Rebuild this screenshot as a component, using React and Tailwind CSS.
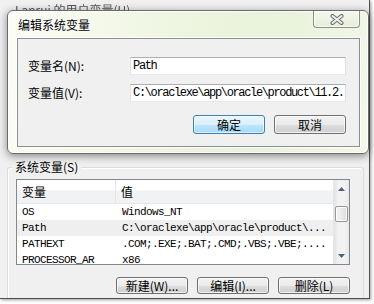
const cjk = "font-['Noto_Sans_CJK_SC','Noto_Sans',sans-serif]"
const mono = "font-['Liberation_Mono','Noto_Sans_CJK_SC',monospace]"

function Button({ children, primary, className = '' }) {
  return (
    <div
      className={
        'flex items-center justify-center rounded-[3px] border text-[12px] leading-none text-black ' +
        (primary
          ? 'border-[#3c7fb1] bg-[linear-gradient(#eaf6fd_0%,#d9f0fc_50%,#bee6fd_51%,#a7d9f5_100%)] shadow-[inset_0_0_0_1px_rgba(255,255,255,0.6)] '
          : 'border-[#707070] bg-[linear-gradient(#f2f2f2_0%,#ebebeb_50%,#dddddd_51%,#cfcfcf_100%)] shadow-[inset_0_0_0_1px_rgba(255,255,255,0.7)] ') +
        className
      }
    >
      {children}
    </div>
  )
}

function TextBox({ value }) {
  return (
    <div className="w-[218px] h-[18px] bg-white border border-t-[#abadb3] border-l-[#e2e3ea] border-r-[#dbdfe6] border-b-[#e3e9ef] overflow-hidden whitespace-nowrap flex items-center pl-[2px]">
      <span className={mono + ' text-[12px] tracking-[-1.35px] leading-none text-black'}>{value}</span>
    </div>
  )
}

const rows = [
  ['OS', 'Windows_NT'],
  ['Path', 'C:\\oraclexe\\app\\oracle\\product\\...'],
  ['PATHEXT', '.COM;.EXE;.BAT;.CMD;.VBS;.VBE;....'],
  ['PROCESSOR_AR', 'x86'],
]

function ListView() {
  return (
    <div className="ml-[8px] w-[334px] h-[86px] border border-[#828790] bg-white flex overflow-hidden">
      <div className="flex-1 flex flex-col overflow-hidden">
        <div className="h-[24px] shrink-0 flex bg-[linear-gradient(#ffffff_0%,#ffffff_45%,#f1f2f4_46%,#f1f2f4_100%)] border-b border-[#e5e7ea]">
          <div className="w-[99px] pl-[5px] flex items-center text-[12px] text-black border-r border-[#e3e5e8]">变量</div>
          <div className="flex-1 pl-[5px] flex items-center text-[12px] text-black">值</div>
        </div>
        {rows.map(([name, value], i) => (
          <div
            key={name}
            className={'h-[16px] shrink-0 flex items-center whitespace-nowrap ' + (i === 1 ? 'bg-[#efefef]' : '')}
          >
            <div className={mono + ' w-[100px] pl-[5px] text-[11px] tracking-[-0.6px] leading-none overflow-hidden'}>{name}</div>
            <div className={mono + ' flex-1 pl-[5px] text-[11px] tracking-[-0.6px] leading-none overflow-hidden'}>{value}</div>
          </div>
        ))}
      </div>
      <div className="w-[16px] shrink-0 flex flex-col bg-[linear-gradient(90deg,#e3e3e3_0%,#f2f2f2_30%,#f2f2f2_70%,#e8e8e8_100%)] border-l border-[#e6e6e6]">
        <div className="h-[17px] flex items-center justify-center">
          <svg width="7" height="4" viewBox="0 0 7 4"><path d="M0 4 L3.5 0 L7 4 Z" fill="#4d6185" /></svg>
        </div>
        <div className="mt-[9px] mx-[1px] h-[16px] rounded-[2px] border border-[#979797] bg-[linear-gradient(90deg,#f3f3f3_0%,#ebebeb_50%,#dbdbdb_100%)] shadow-[inset_0_0_0_1px_rgba(255,255,255,0.8)]" />
        <div className="flex-1" />
        <div className="h-[17px] flex items-center justify-center">
          <svg width="7" height="4" viewBox="0 0 7 4"><path d="M0 0 L7 0 L3.5 4 Z" fill="#4d6185" /></svg>
        </div>
      </div>
    </div>
  )
}

function EditDialog() {
  return (
    <div className="absolute left-[7px] top-[10px] w-[362px] h-[144px] rounded-[6px] border border-[#6b6b6b] bg-[linear-gradient(100deg,#fbfdf6_0%,#eef5e0_45%,#e9f2da_70%,#f3f8ea_100%)] shadow-[0_2px_8px_rgba(0,0,0,0.45),inset_0_0_0_1px_rgba(255,255,255,0.85)] flex flex-col">
      <div className="h-[27px] shrink-0 flex items-start">
        <div className="h-full flex items-center pl-[10px] flex-1 text-[12px] text-black [text-shadow:0_0_5px_#fff,0_0_3px_#fff]">编辑系统变量</div>
        <div className="mr-[8px] w-[47px] h-[17px] rounded-b-[4px] border border-t-0 border-[#8d9089] bg-[linear-gradient(#f4f8ee,#e6eedb)] shadow-[inset_0_0_0_1px_rgba(255,255,255,0.7)] flex items-center justify-center">
          <svg width="14" height="11" viewBox="0 0 14 11">
            <path d="M2.5 2 L11.5 9 M11.5 2 L2.5 9" stroke="#6a6a6a" strokeWidth="4" strokeLinecap="round" />
            <path d="M2.5 2 L11.5 9 M11.5 2 L2.5 9" stroke="#f2f2f2" strokeWidth="2" strokeLinecap="round" />
          </svg>
        </div>
      </div>
      <div className="mx-[9px] mr-[8px] h-[109px] border border-[#8e8f8f] bg-[#f0f0f0] shadow-[0_0_0_1px_rgba(255,255,255,0.75)] pl-[10px] pr-[13px] pt-[18px]">
        <div className="flex items-center h-[18px]">
          <div className="w-[103px] text-[12px] text-black">变量名(N):</div>
          <TextBox value="Path" />
        </div>
        <div className="flex items-center h-[18px] mt-[9px]">
          <div className="w-[103px] text-[12px] text-black">变量值(V):</div>
          <TextBox value="C:\oraclexe\app\oracle\product\11.2." />
        </div>
        <div className="flex justify-end gap-[9px] mt-[13px]">
          <Button primary className="w-[72px] h-[19px]">确定</Button>
          <Button className="w-[72px] h-[19px]">取消</Button>
        </div>
      </div>
    </div>
  )
}

export default function App() {
  return (
    <div className={cjk + ' relative w-[374px] h-[304px] bg-white overflow-hidden'}>
      <div className="w-[370px] h-[299px] bg-[#f0f0f0] border-r border-b border-[#4f4f4f] shadow-[1px_1px_3px_rgba(0,0,0,0.4)] flex flex-col overflow-hidden">
        <div className="h-[160px] shrink-0 pl-[15px] pt-[3px] text-[12px] leading-[14px] text-[#555] blur-[0.7px]">
          Lanrui 的用户变量(U)
        </div>
        <div className="ml-[7px] w-[357px] mt-[7px] h-[200px] shrink-0 border border-b-0 border-[#d5dfe5] rounded-t-[3px] shadow-[inset_1px_1px_0_#fff]">
          <div className="-mt-[8px] ml-[4px] px-[3px] w-fit h-[14px] leading-[14px] bg-[#f0f0f0] text-[12px] text-black">
            系统变量(S)
          </div>
          <div className="mt-[5px]">
            <ListView />
          </div>
          <div className="flex justify-end gap-[9px] pr-[13px] mt-[12px]">
            <Button className="w-[72px] h-[17px]">新建(W)...</Button>
            <Button className="w-[72px] h-[17px]">编辑(I)...</Button>
            <Button className="w-[72px] h-[17px]">删除(L)</Button>
          </div>
        </div>
      </div>
      <EditDialog />
    </div>
  )
}
